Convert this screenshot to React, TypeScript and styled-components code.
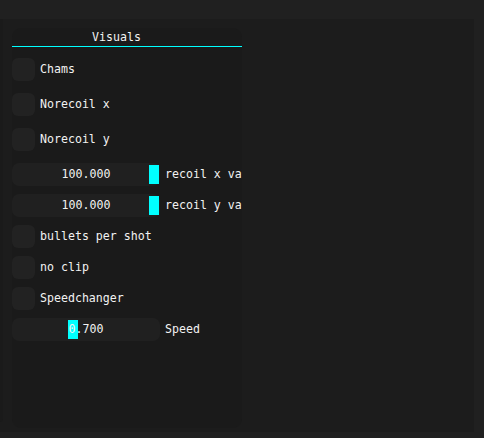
import React from "react";
import styled, { createGlobalStyle } from "styled-components";

const Global = createGlobalStyle`
  html, body { margin: 0; padding: 0; background: #202020; }
  body { font-family: "DejaVu Sans Mono", "Liberation Mono", monospace; font-size: 11.6px; color: #f2f2f2; }
`;

const Screen = styled.div`
  width: 484px;
  height: 438px;
  padding: 19px 10px 6px 0;
  box-sizing: border-box;
  background: #202020;
  display: flex;
`;

const Outer = styled.div`
  width: 474px;
  height: 413px;
  background: #1c1c1c;
  display: flex;
  align-items: flex-start;
`;

const EdgeStrip = styled.div`
  width: 3px;
  height: 403px;
  background: #1a1a1a;
  border-radius: 0 0 6px 0;
`;

const Child = styled.div`
  margin: 9px 0 0 9px;
  width: 230px;
  height: 400px;
  background: #1a1a1a;
  border-radius: 9px;
  overflow: hidden;
  display: flex;
  flex-direction: column;
`;

const Title = styled.div`
  height: 18px;
  line-height: 18px;
  padding-left: 80px;
  border-bottom: 1px solid #00ffff;
`;

const Body = styled.div`
  padding-top: 11px;
  display: flex;
  flex-direction: column;
`;

const Row = styled.div<{ $mt: number }>`
  display: flex;
  align-items: center;
  height: 23px;
  margin-top: ${(p) => p.$mt}px;
  white-space: nowrap;
`;

const Box = styled.div`
  width: 23px;
  height: 23px;
  border-radius: 6px;
  background: #222222;
  flex: none;
`;

const Label = styled.span`
  margin-left: 5px;
  line-height: 23px;
`;

const Track = styled.div`
  position: relative;
  width: 148px;
  height: 23px;
  border-radius: 7px;
  background: #202020;
  flex: none;
  display: flex;
  align-items: center;
  justify-content: center;
`;

const Grab = styled.div`
  position: absolute;
  top: 2px;
  width: 10px;
  height: 19px;
  background: #00ffff;
`;

const Value = styled.span`
  position: relative;
  line-height: 23px;
`;

function Checkbox({ label, mt }: { label: string; mt: number }) {
  return (
    <Row $mt={mt}>
      <Box />
      <Label>{label}</Label>
    </Row>
  );
}

function Slider({ label, value, left, mt }: { label: string; value: string; left: number; mt: number }) {
  return (
    <Row $mt={mt}>
      <Track>
        <Grab style={{ left }} />
        <Value>{value}</Value>
      </Track>
      <Label>{label}</Label>
    </Row>
  );
}

export default function App() {
  return (
    <>
      <Global />
      <Screen>
        <Outer>
          <EdgeStrip />
          <Child>
            <Title>Visuals</Title>
            <Body>
              <Checkbox label="Chams" mt={0} />
              <Checkbox label="Norecoil x" mt={12} />
              <Checkbox label="Norecoil y" mt={12} />
              <Slider label="recoil x value" value="100.000" left={137} mt={12} />
              <Slider label="recoil y value" value="100.000" left={137} mt={8} />
              <Checkbox label="bullets per shot" mt={8} />
              <Checkbox label="no clip" mt={8} />
              <Checkbox label="Speedchanger" mt={8} />
              <Slider label="Speed" value="0.700" left={56} mt={8} />
            </Body>
          </Child>
        </Outer>
      </Screen>
    </>
  );
}
